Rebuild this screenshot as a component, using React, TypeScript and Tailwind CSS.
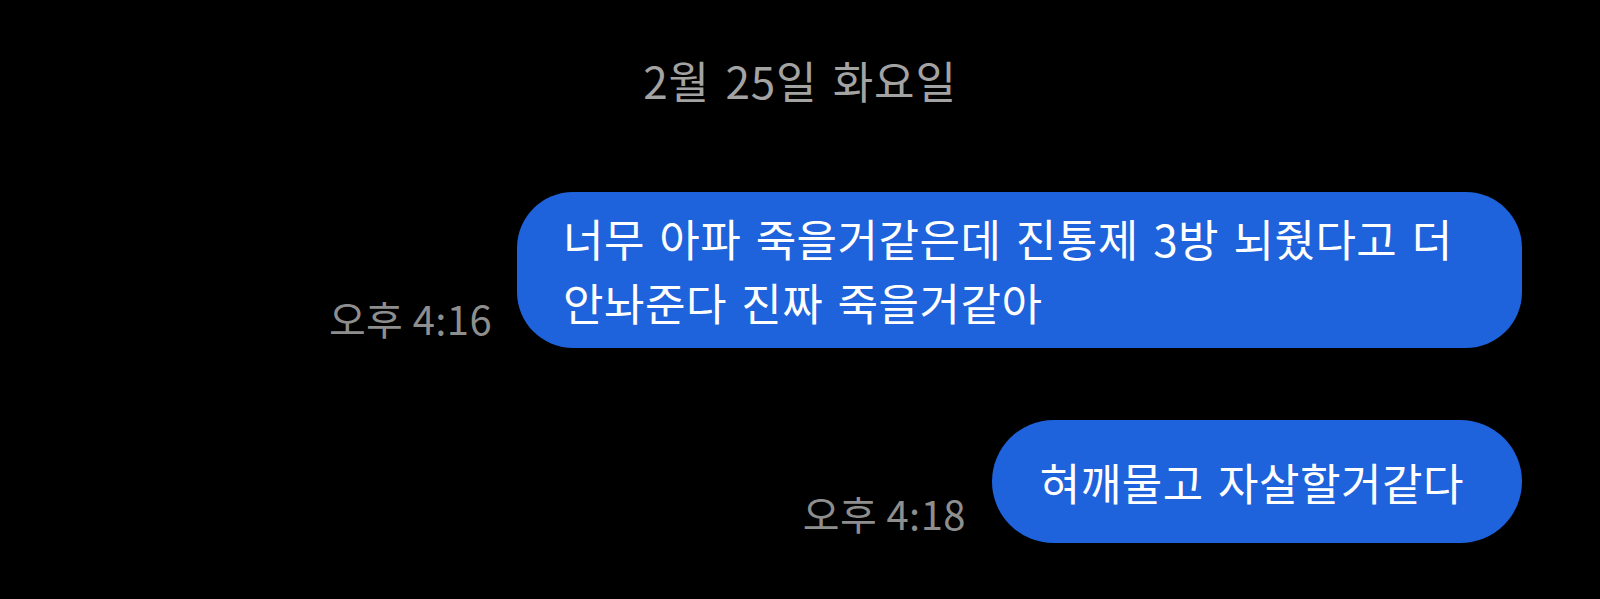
export default function App() {
  const font = { fontFamily: '"Noto Sans CJK KR", "Noto Sans", sans-serif' }

  return (
    <div className="w-[1600px] h-[599px] bg-black overflow-hidden" style={font}>
      <div className="pt-[52px] text-center text-[44px] leading-[56px] tracking-[0.8px] [word-spacing:5px] text-[#a3a3a3]">
        2월 25일 화요일
      </div>

      <div className="mt-[84px] flex flex-col items-end pr-[78px]">
        <div className="flex items-end gap-[25px]">
          <span className="mb-[8px] text-[40px] leading-[44px] tracking-[0.4px] text-[#8e8e8e]">오후 4:16</span>
          <div className="w-[1005px] rounded-[56px] bg-[#1e62dc] pl-[46px] pr-[50px] py-[14px] text-[44px] leading-[64px] tracking-[0.5px] [word-spacing:4px] text-white">
            너무 아파 죽을거같은데 진통제 3방 뇌줬다고 더 안놔준다 진짜 죽을거같아
          </div>
        </div>

        <div className="mt-[72px] flex items-end gap-[26px]">
          <span className="mb-[8px] text-[40px] leading-[44px] tracking-[0.4px] text-[#8e8e8e]">오후 4:18</span>
          <div className="flex h-[123px] items-center rounded-[62px] bg-[#1e62dc] pl-[48px] pr-[58px] text-[44px] leading-[64px] tracking-[0.5px] [word-spacing:4px] text-white">
            혀깨물고 자살할거같다
          </div>
        </div>
      </div>
    </div>
  )
}
